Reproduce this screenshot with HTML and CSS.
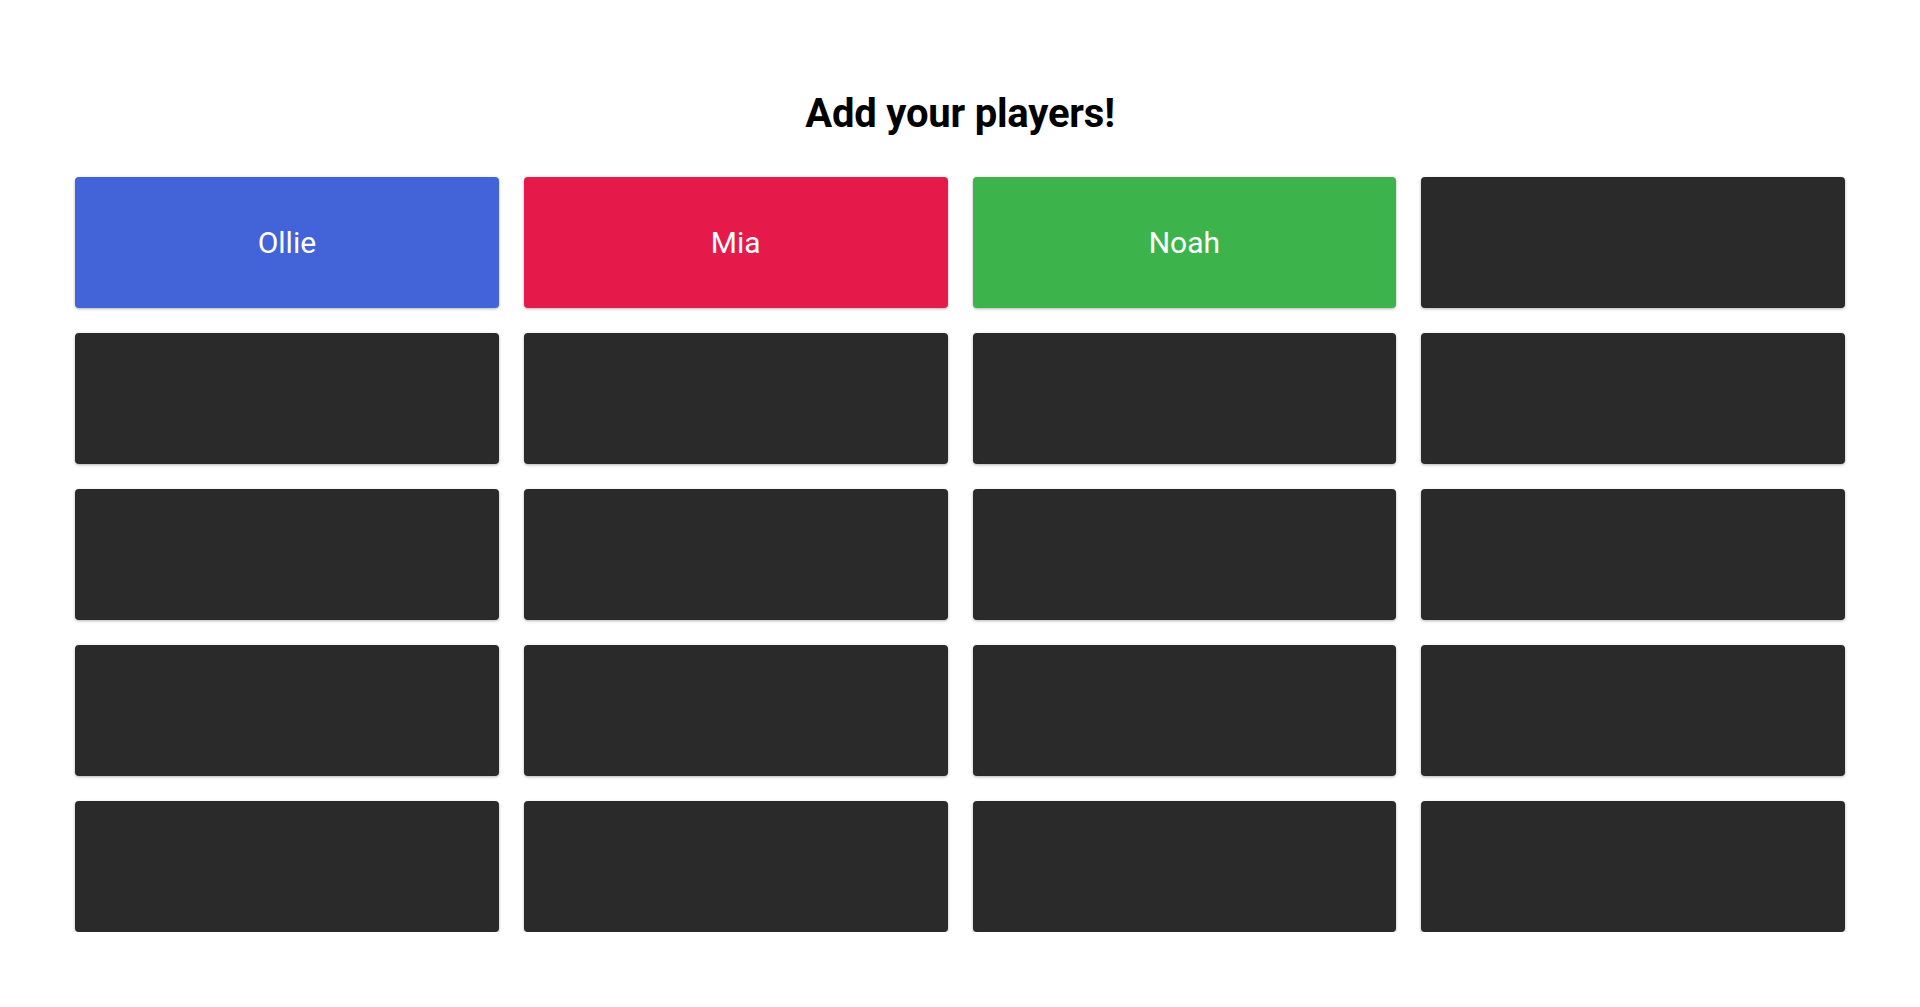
FILE: index.html
```html
<!DOCTYPE html>
<html lang="en">
<head>
<meta charset="utf-8">
<title>Add your players!</title>
<link rel="stylesheet" href="styles.css">
</head>
<body>
<main class="page">
  <h1 class="title">Add your players!</h1>
  <div class="grid">
    <div class="card card-blue">Ollie</div>
    <div class="card card-red">Mia</div>
    <div class="card card-green">Noah</div>
    <div class="card"></div>
    <div class="card"></div>
    <div class="card"></div>
    <div class="card"></div>
    <div class="card"></div>
    <div class="card"></div>
    <div class="card"></div>
    <div class="card"></div>
    <div class="card"></div>
    <div class="card"></div>
    <div class="card"></div>
    <div class="card"></div>
    <div class="card"></div>
    <div class="card"></div>
    <div class="card"></div>
    <div class="card"></div>
    <div class="card"></div>
  </div>
</main>
</body>
</html>
```
FILE: styles.css
```css
html, body {
  margin: 0;
  padding: 0;
  background: #ffffff;
}
body {
  font-family: Roboto, "Liberation Sans", Arial, sans-serif;
  color: #000;
}
.page {
  padding: 90px 75px 0;
}
.title {
  margin: 0 0 39px;
  font-size: 40px;
  line-height: 48px;
  font-weight: 700;
  text-align: center;
  letter-spacing: -0.2px;
}
.grid {
  display: grid;
  grid-template-columns: repeat(4, 1fr);
  column-gap: 25px;
  row-gap: 25px;
}
.card {
  height: 131px;
  border-radius: 4px;
  background: #2a2a2a;
  box-shadow: 0 1px 3px rgba(0, 0, 0, 0.3);
  display: flex;
  align-items: center;
  justify-content: center;
  color: #fff;
  font-size: 30px;
}
.card-blue { background: #4363d8; }
.card-red { background: #e6194b; }
.card-green { background: #3cb44b; }
```
